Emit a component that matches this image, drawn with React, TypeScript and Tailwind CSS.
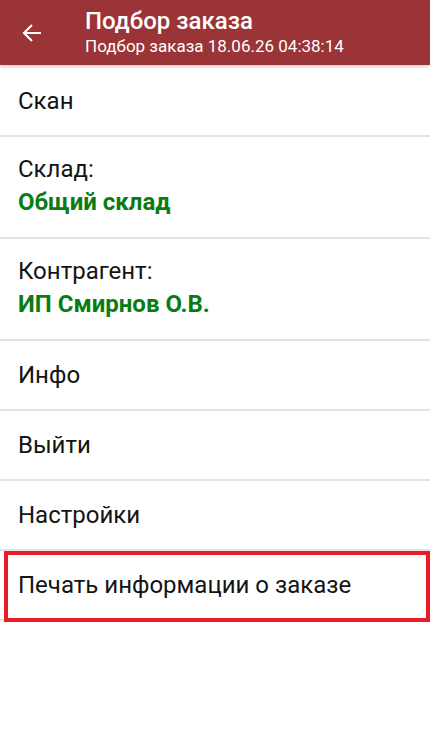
import React from "react";

const font = { fontFamily: "Roboto, 'Noto Sans', sans-serif" };

function Divider() {
  return <div className="h-[2px] bg-[#e3e3e3]" />;
}

function SingleRow({ label, tall }: { label: string; tall?: boolean }) {
  return (
    <div
      className={
        (tall ? "h-[69px]" : "h-[68px]") +
        " flex items-center px-[18px] text-[24px] text-[#141414]"
      }
    >
      {label}
    </div>
  );
}

function DoubleRow({ label, value }: { label: string; value: string }) {
  return (
    <div className="h-[100px] flex flex-col justify-center px-[18px] pb-[2px]">
      <div className="text-[24px] leading-[33px] text-[#141414]">{label}</div>
      <div className="text-[24px] leading-[33px] font-bold text-[#0a7d12]">{value}</div>
    </div>
  );
}

export default function App() {
  return (
    <div className="w-[430px] h-[739px] bg-white overflow-hidden" style={font}>
      <header className="relative z-10 h-[65px] bg-[#9a3436] flex items-center shadow-[0_2px_3px_rgba(0,0,0,0.18)]">
        <div className="w-[85px] flex justify-center pr-[21px]">
          <svg width="20" height="20" viewBox="0 0 20 20" fill="none">
            <path d="M19 10H2.5M10 2L2 10l8 8" stroke="white" strokeWidth="2.2" />
          </svg>
        </div>
        <div className="flex flex-col text-white">
          <div className="text-[24px] leading-[28px] font-medium mt-[-2px]">Подбор заказа</div>
          <div className="text-[17px] leading-[20px] mt-[1px]">Подбор заказа 18.06.26 04:38:14</div>
        </div>
      </header>
      <main className="flex flex-col pt-[1px]">
        <SingleRow label="Скан" tall />
        <Divider />
        <DoubleRow label="Склад:" value="Общий склад" />
        <Divider />
        <DoubleRow label="Контрагент:" value="ИП Смирнов О.В." />
        <Divider />
        <SingleRow label="Инфо" />
        <Divider />
        <SingleRow label="Выйти" />
        <Divider />
        <SingleRow label="Настройки" />
        <Divider />
        <div className="relative">
          <SingleRow label="Печать информации о заказе" />
          <div className="absolute left-[4px] right-0 top-0 bottom-[-3px] border-[4px] border-[#ec1c24]" />
        </div>
        <Divider />
      </main>
    </div>
  );
}
